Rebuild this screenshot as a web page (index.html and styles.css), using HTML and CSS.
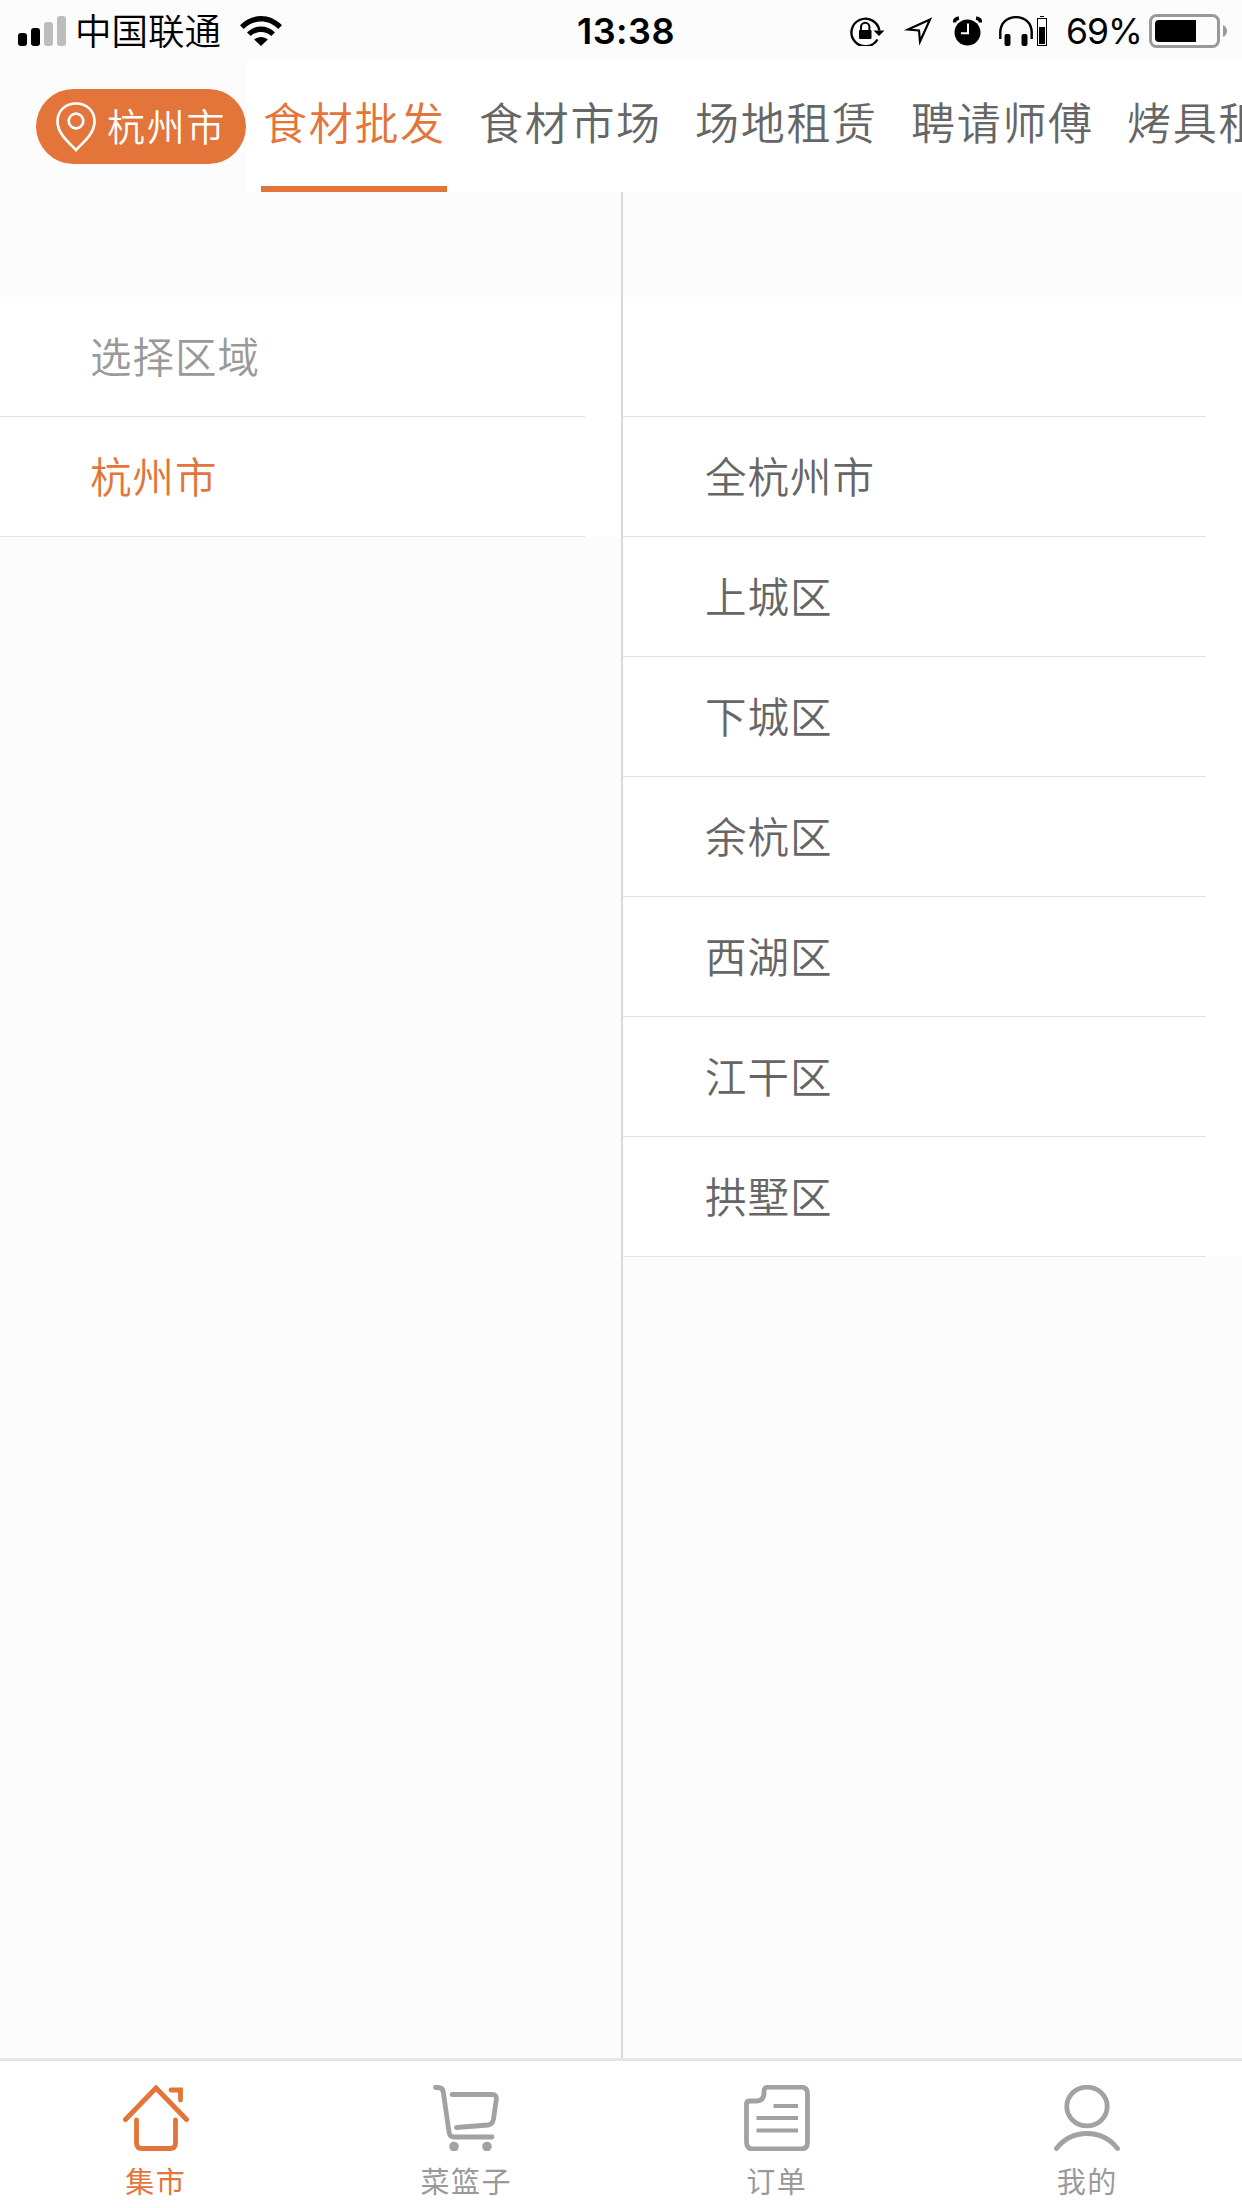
FILE: index.html
```html
<!DOCTYPE html>
<html lang="zh-CN">
<head>
  <meta charset="UTF-8" />
  <meta name="viewport" content="width=device-width, initial-scale=1.0"/>
  <title>食材批发</title>
  <link rel="stylesheet" href="styles.css">
</head>
<body>
  <div class="status-bar">
    <div class="status-left">
      <svg class="signal" width="48" height="30" viewBox="0 0 48 30">
        <rect x="0" y="17" width="9" height="13" rx="3"/>
        <rect x="13" y="12" width="9" height="18" rx="3"/>
        <rect x="26" y="6" width="9" height="24" rx="3" fill="#bdbdbd"/>
        <rect x="39" y="0" width="9" height="30" rx="3" fill="#bdbdbd"/>
      </svg>
      <span class="carrier">中国联通</span>
      <svg class="wifi" width="42" height="30" viewBox="0 0 42 30">
        <path d="M0 9.3C12-3.1 30-3.1 42 9.3L38.3 13C28.5 3.1 13.500 3.100 3.700 13Z"/>
        <path d="M7 16.400C15 8.600 27 8.600 35 16.400L31.300 20C25.500 14.600 16.500 14.600 10.700 20Z"/>
        <path d="M14.200 23.500C18 20 24 20 27.800 23.500L21 30Z"/>
      </svg>
    </div>
    <div class="time">13:38</div>
    <div class="status-right">
      <svg class="lock" width="35" height="30" viewBox="0 0 35 30">
        <path d="M27.500 23.500A14 13.800 0 1 1 29.300 14.500" fill="none" stroke="#000" stroke-width="2.400"/>
        <path d="M23.500 14.500H34.500L29 20Z"/>
        <rect x="9" y="14" width="12.500" height="9" rx="1"/>
        <path d="M11 15V11a4.200 4.200 0 0 1 8.400 0V15" fill="none" stroke="#000" stroke-width="2"/>
      </svg>
      <svg class="arrow" width="31" height="31" viewBox="0 0 31 31">
        <path d="M27 3.500L5 13.500L16 14.500L17 25.500Z" fill="none" stroke="#000" stroke-width="2.200"/>
      </svg>
      <svg class="alarm" width="29" height="30" viewBox="0 0 29 30">
        <circle cx="14.500" cy="16.500" r="13"/>
        <path d="M1.500 6.500Q1.500 2.500 6 2.200M27.500 6.500Q27.500 2.500 23 2.200" fill="none" stroke="#000" stroke-width="3.500"/>
        <path d="M15 7.500V17.200H8" fill="none" stroke="#fff" stroke-width="2"/>
      </svg>
      <svg class="headphones" width="34" height="30" viewBox="0 0 34 30">
        <path d="M1.300 23V16.500C1.300-4 32.700-4 32.700 16.500V23" fill="none" stroke="#000" stroke-width="2.400"/>
        <rect x="5.500" y="18" width="6" height="12" rx="2"/>
        <rect x="22.500" y="18" width="6" height="12" rx="2"/>
      </svg>
      <svg class="mini-battery" width="10" height="30" viewBox="0 0 10 30">
        <rect x="3" y="0" width="4" height="1"/>
        <rect x="0.500" y="2.500" width="9" height="27" fill="none" stroke="#000"/>
        <rect x="2" y="11" width="6" height="17"/>
      </svg>
      <span class="percent">69%</span>
      <svg class="battery" width="78" height="34" viewBox="0 0 78 34">
        <rect x="1.500" y="1.500" width="68" height="31" rx="6" fill="none" stroke="#999" stroke-width="3"/>
        <path d="M47 6V28H10Q6 28 6 24V10Q6 6 10 6Z"/>
        <path d="M74 11Q78 13 78 17T74 23Z" fill="#999"/>
      </svg>
    </div>
  </div>

  <div class="header">
    <div class="city">
      <svg width="40" height="50" viewBox="0 0 40 50" fill="none" stroke="#fff" stroke-width="2.700">
        <path d="M20 48C16 43 1.500 33 1.500 19.500C1.500 8.500 9.500 1.500 20 1.500S38.500 8.500 38.500 19.500C38.500 33 24 43 20 48Z"/>
        <circle cx="20" cy="19" r="7.300"/>
      </svg>
      <span>杭州市</span>
    </div>
    <div class="tabs">
      <div class="tab active">食材批发</div>
      <div class="tab">食材市场</div>
      <div class="tab">场地租赁</div>
      <div class="tab">聘请师傅</div>
      <div class="tab">烤具租赁</div>
    </div>
  </div>

  <div class="picker">
    <div class="column left">
      <div class="row"><div class="cell title">选择区域</div></div>
      <div class="row"><div class="cell selected">杭州市</div></div>
    </div>
    <div class="column right">
      <div class="row"><div class="cell"></div></div>
      <div class="row"><div class="cell">全杭州市</div></div>
      <div class="row"><div class="cell">上城区</div></div>
      <div class="row"><div class="cell">下城区</div></div>
      <div class="row"><div class="cell">余杭区</div></div>
      <div class="row"><div class="cell">西湖区</div></div>
      <div class="row"><div class="cell">江干区</div></div>
      <div class="row"><div class="cell">拱墅区</div></div>
    </div>
  </div>

  <div class="nav">
    <div class="nav-item active">
      <svg width="66" height="66" viewBox="0 0 66 66">
        <path d="M2.500 34.500L33 3L63.500 34.500" stroke-width="5"/>
        <path d="M48 5H57.500V15"/>
        <path d="M13.500 35V58Q13.500 63.500 19 63.500H47Q52.500 63.500 52.500 58V35"/>
      </svg>
      <span>集市</span>
    </div>
    <div class="nav-item">
      <svg width="66" height="66" viewBox="0 0 66 66">
        <path d="M2.500 2.500H5Q9.500 2.500 10.300 7L16 47Q16.700 52 20.500 52H59"/>
        <path d="M19 9.500H59Q64 9.500 63.300 14.500L60.500 34Q59.700 39.500 55 40L23.500 42.500"/>
        <circle class="dot" cx="21" cy="61.500" r="4.800"/>
        <circle class="dot" cx="54" cy="61.500" r="4.800"/>
      </svg>
      <span>菜篮子</span>
    </div>
    <div class="nav-item">
      <svg width="66" height="66" viewBox="0 0 66 66">
        <path d="M24 2.200H57Q63.500 2.200 63.500 8.500V57.500Q63.500 64 57 64H9Q2.500 64 2.500 57.500V19Q2.500 16 6 16H12Q20 16 20 8V6Q20 2.200 24 2.200Z"/>
        <path class="line" d="M29.500 21H54M12.500 33H54M12.500 45.500H54"/>
      </svg>
      <span>订单</span>
    </div>
    <div class="nav-item">
      <svg width="66" height="66" viewBox="0 0 66 66">
        <ellipse cx="33" cy="21.500" rx="20.200" ry="19.300"/>
        <path d="M2.500 63.500C18 43.500 48 43.500 63.500 63.500"/>
      </svg>
      <span>我的</span>
    </div>
  </div>
</body>
</html>
```

FILE: styles.css
```css
* {
  box-sizing: border-box;
}
body {
  margin: 0;
  width: 1242px;
  height: 2208px;
  display: flex;
  flex-direction: column;
  overflow: hidden;
  background: #fcfcfc;
  color: #666;
  font-family: "Noto Sans CJK SC", sans-serif;
  font-weight: 350;
}
svg {
  display: block;
  flex: none;
}

/* status bar */
.status-bar {
  height: 60px;
  display: grid;
  grid-template-columns: 1fr auto 1fr;
  color: #000;
  line-height: 60px;
  white-space: nowrap;
}
.status-left {
  display: flex;
  align-items: center;
  padding-left: 18px;
}
.carrier {
  width: 146px;
  margin-left: 9px;
  padding-bottom: 3px;
  font-size: 36.5px;
  line-height: 56px;
}
.wifi {
  margin-left: 19px;
}
.time {
  padding-left: 10px;
  font-family: Inter, sans-serif;
  font-size: 36px;
  font-weight: 600;
  letter-spacing: 0.5px;
  line-height: 62px;
}
.status-right {
  display: flex;
  align-items: center;
  justify-content: flex-end;
  padding-right: 15px;
}
.arrow {
  margin-left: 18px;
}
.alarm {
  margin-left: 19px;
}
.headphones {
  margin-left: 17px;
}
.mini-battery {
  margin-left: 4px;
}
.percent {
  width: 75px;
  margin-left: 19px;
  padding-top: 2px;
  font-family: Inter, sans-serif;
  font-size: 35.5px;
  font-weight: 400;
  letter-spacing: -1px;
}
.battery {
  margin-left: 8px;
}

/* header */
.header {
  height: 132px;
  display: flex;
  padding-left: 36px;
}
.city {
  flex: none;
  width: 210px;
  height: 75px;
  margin-top: 29px;
  display: flex;
  align-items: center;
  padding-left: 20px;
  border-radius: 38px;
  background: #e3753a;
  color: #fff;
  font-size: 38px;
  letter-spacing: 1.7px;
  line-height: 72px;
}
.city span {
  height: 75px;
  margin-left: 11px;
}
.tabs {
  flex: 1;
  display: flex;
  gap: 30px;
  padding-left: 15px;
  overflow: hidden;
  background: #fff;
}
.tab {
  flex: none;
  width: 186px;
  height: 132px;
  padding-left: 2px;
  font-size: 44px;
  letter-spacing: 1.7px;
  line-height: 123px;
  white-space: nowrap;
}
.tab.active {
  color: #e3753a;
  border-bottom: 6px solid #e3753a;
}

/* area picker */
.picker {
  flex: 1;
  display: flex;
}
.column {
  padding-top: 105px;
}
.left {
  width: 623px;
  border-right: 2px solid #d9d9d9;
}
.right {
  flex: 1;
}
.row {
  height: 120px;
  padding-right: 36px;
  background: #fff;
}
.cell {
  height: 120px;
  padding-left: 90px;
  border-bottom: 1px solid #e3e3e3;
  font-size: 41.5px;
  letter-spacing: 1px;
  line-height: 117px;
}
.right .cell {
  padding-left: 82px;
}
.cell.title {
  color: #999;
}
.cell.selected {
  color: #e3753a;
}

/* bottom navigation */
.nav {
  height: 150px;
  display: flex;
  border-top: 3px solid #e5e5e5;
  background: #fff;
}
.nav-item {
  flex: 1;
  display: flex;
  flex-direction: column;
  align-items: center;
  padding-top: 24px;
  padding-left: 1px;
  color: #999;
  font-size: 29px;
  font-weight: 400;
  letter-spacing: 1.5px;
  line-height: 58px;
}
.nav-item.active {
  color: #e3753a;
}
.nav-item svg {
  fill: none;
  stroke: #a2a2a2;
  stroke-width: 4.8;
  stroke-linecap: round;
}
.nav-item.active svg {
  stroke: #e3753a;
}
.nav-item .dot {
  fill: #a2a2a2;
  stroke: none;
}
.nav-item .line {
  stroke-width: 4;
  stroke-linecap: butt;
}
```
